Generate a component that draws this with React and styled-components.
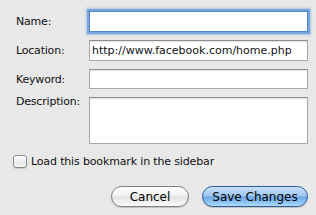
import styled, { createGlobalStyle } from "styled-components";

const GlobalStyle = createGlobalStyle`
  html, body {
    margin: 0;
    padding: 0;
    background: #e8e8e8;
  }
  * {
    box-sizing: border-box;
  }
`;

const Dialog = styled.div`
  width: 316px;
  height: 215px;
  background: #e8e8e8;
  font-family: "DejaVu Sans", "Liberation Sans", sans-serif;
  font-size: 11px;
  color: #111;
  padding: 11px 8px 0 16px;
`;

const Form = styled.div`
  display: grid;
  grid-template-columns: 73px 219px;
  row-gap: 8px;
`;

const Label = styled.label`
  display: flex;
  align-items: ${(p) => (p.$top ? "flex-start" : "center")};
  margin-top: ${(p) => (p.$top ? "-2px" : "0")};
  letter-spacing: -0.2px;
  white-space: nowrap;
`;

const Field = styled.div`
  height: ${(p) => p.$height || 21}px;
  background: #fff;
  border: 1px solid #a8a8a8;
  border-top-color: #8e8e8e;
  box-shadow: inset 0 1px 1px rgba(0, 0, 0, 0.12);
  padding: 0 2px;
  display: flex;
  align-items: ${(p) => (p.$multi ? "flex-start" : "center")};
  ${(p) =>
    p.$focus &&
    `
    border: 1px solid #4f86c9;
    box-shadow: 0 0 0 2px #78a6dd, 0 0 2px 3px rgba(110, 160, 220, 0.5);
  `}
`;

const CheckRow = styled.label`
  display: flex;
  align-items: center;
  gap: 4px;
  margin: 11px 0 0 -3px;
  letter-spacing: -0.15px;
`;

const Box = styled.span`
  width: 14px;
  height: 13px;
  border: 1px solid #8a8a8a;
  border-radius: 3px;
  background: linear-gradient(#ffffff, #eaeaea 60%, #f4f4f4);
  box-shadow: 0 1px 1px rgba(0, 0, 0, 0.12);
`;

const Buttons = styled.div`
  display: flex;
  justify-content: flex-end;
  gap: 13px;
  margin-top: 18px;
`;

const Button = styled.button`
  height: 21px;
  width: ${(p) => p.$w}px;
  border-radius: 11px;
  font-family: inherit;
  font-size: 12px;
  padding: 0;
  color: #000;
  border: 1px solid ${(p) => (p.$primary ? "#2d5a98" : "#7e7e7e")};
  background: ${(p) =>
    p.$primary
      ? "linear-gradient(#c6e0f9 0%, #a0c8f0 45%, #6fa8e6 52%, #8cc3f3 80%, #b0dcfb 100%)"
      : "linear-gradient(#ffffff 0%, #f2f2f2 45%, #e2e2e2 52%, #fafafa 100%)"};
  box-shadow: 0 1px 1px rgba(0, 0, 0, 0.18);
`;

export default function App() {
  return (
    <>
      <GlobalStyle />
      <Dialog>
        <Form>
          <Label>Name:</Label>
          <Field $focus />
          <Label>Location:</Label>
          <Field>http://www.facebook.com/home.php</Field>
          <Label>Keyword:</Label>
          <Field $height={20} />
          <Label $top>Description:</Label>
          <Field $height={47} $multi />
        </Form>
        <CheckRow>
          <Box />
          Load this bookmark in the sidebar
        </CheckRow>
        <Buttons>
          <Button $w={78}>Cancel</Button>
          <Button $w={106} $primary>
            Save Changes
          </Button>
        </Buttons>
      </Dialog>
    </>
  );
}
